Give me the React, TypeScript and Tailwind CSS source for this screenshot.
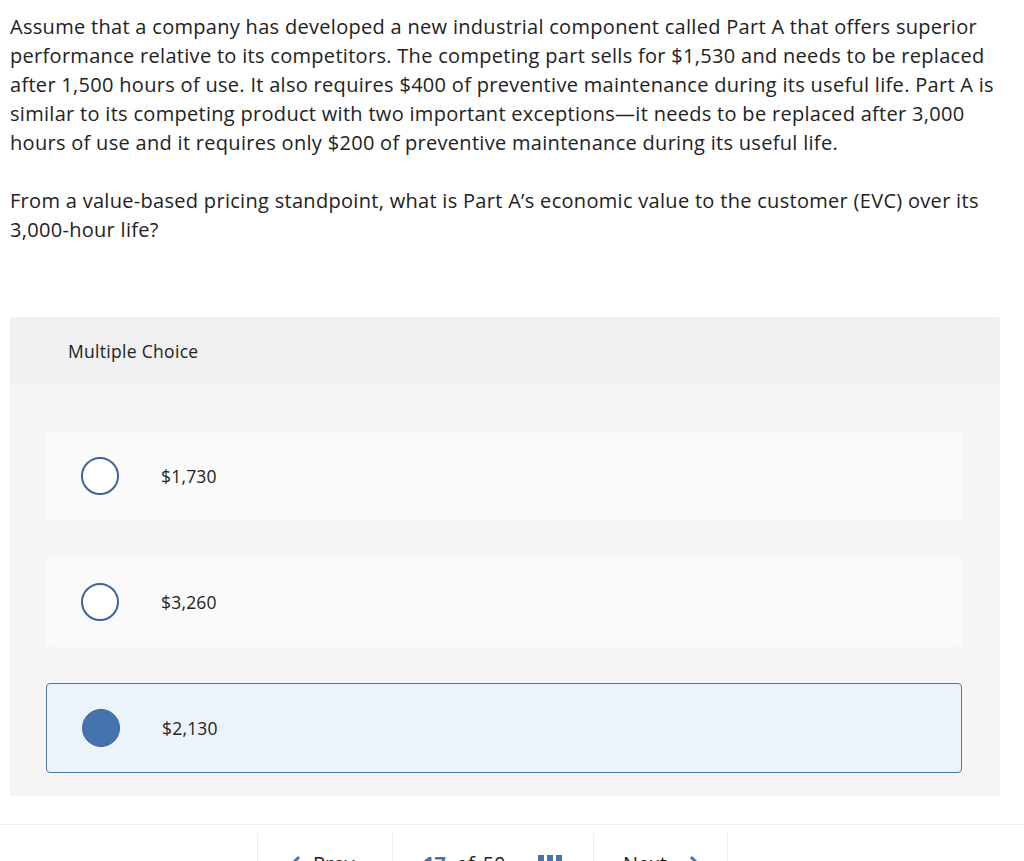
import React from 'react';

const options = [
  { label: '$1,730', selected: false },
  { label: '$3,260', selected: false },
  { label: '$2,130', selected: true },
];

const App: React.FC = () => {
  return (
    <div className="min-h-[861px] bg-white text-[#222] font-['Open_Sans','Liberation_Sans',sans-serif]">
      {/* Question */}
      <div className="px-[10px] pt-[12px] w-[1024px] text-[20px] leading-[29px] tracking-[0.3px]">
        <p>
          Assume that a company has developed a new industrial component called Part A that offers superior<br />
          performance relative to its competitors. The competing part sells for $1,530 and needs to be replaced<br />
          after 1,500 hours of use. It also requires $400 of preventive maintenance during its useful life. Part A is<br />
          similar to its competing product with two important exceptions—it needs to be replaced after 3,000<br />
          hours of use and it requires only $200 of preventive maintenance during its useful life.
        </p>
        <p className="mt-[29px]">
          From a value-based pricing standpoint, what is Part A’s economic value to the customer (EVC) over its<br />
          3,000-hour life?
        </p>
      </div>

      {/* Multiple choice panel */}
      <div className="ml-[10px] mt-[73px] w-[990px] rounded-t-[4px] bg-[#f5f5f5]">
        <div className="h-[68px] flex items-center pl-[58px] bg-[#f0f0f0] rounded-t-[4px] text-[17.5px] tracking-[0.3px]">
          Multiple Choice
        </div>
        <div className="pl-[36px] pr-[38px] pt-[46px] pb-[23px] flex flex-col gap-[36px]">
          {options.map((opt, i) => (
            <div
              key={i}
              className={
                opt.selected
                  ? 'h-[90px] flex items-center rounded-[4px] border-[1.5px] border-[#4b79b7] bg-[#edf3fb]'
                  : 'h-[90px] flex items-center rounded-[4px] bg-[#fafafa]'
              }
            >
              <div className="w-[38px] h-[38px] ml-[35px] shrink-0">
                {opt.selected ? (
                  <div className="w-[38px] h-[38px] rounded-full bg-[#4573b0] border-[1.5px] border-[#3b6499]" />
                ) : (
                  <div className="w-[38px] h-[38px] rounded-full bg-white border-2 border-[#3c6497]" />
                )}
              </div>
              <span className="ml-[42px] text-[17.5px] tracking-[0.2px]">{opt.label}</span>
            </div>
          ))}
        </div>
      </div>

      {/* Footer nav */}
      <div className="mt-[28px] border-t border-[#ededed] flex justify-start pl-[257px] pt-[8px]">
        <div className="w-[136px] h-[40px] border-l border-r border-[#ededed] flex items-start pt-[21px] pl-[33px] text-[20px] leading-none">
          <svg width="10" height="16" viewBox="0 0 10 16" className="mt-[1px]">
            <path d="M8 2 L2 8 L8 14" fill="none" stroke="#4573b0" strokeWidth="3" />
          </svg>
          <span className="ml-[12px]">Prev</span>
        </div>
        <div className="w-[201px] h-[40px] border-r border-[#ededed] flex items-start pt-[21px] pl-[30px] text-[20px] leading-none">
          <span className="text-[#4573b0] font-bold">17</span>
          <span className="ml-[10px]">of</span>
          <span className="ml-[8px]">50</span>
          <svg width="24" height="20" viewBox="0 0 24 20" className="ml-[32px] mt-[1px]">
            <rect x="0" y="0" width="6" height="20" fill="#4573b0" />
            <rect x="9" y="0" width="6" height="20" fill="#4573b0" />
            <rect x="18" y="0" width="6" height="20" fill="#4573b0" />
          </svg>
        </div>
        <div className="w-[134px] h-[40px] border-r border-[#ededed] flex items-start pt-[21px] pl-[29px] text-[20px] leading-none">
          <span>Next</span>
          <svg width="10" height="16" viewBox="0 0 10 16" className="ml-[22px] mt-[1px]">
            <path d="M2 2 L8 8 L2 14" fill="none" stroke="#4573b0" strokeWidth="3" />
          </svg>
        </div>
      </div>
    </div>
  );
};

export default App;
